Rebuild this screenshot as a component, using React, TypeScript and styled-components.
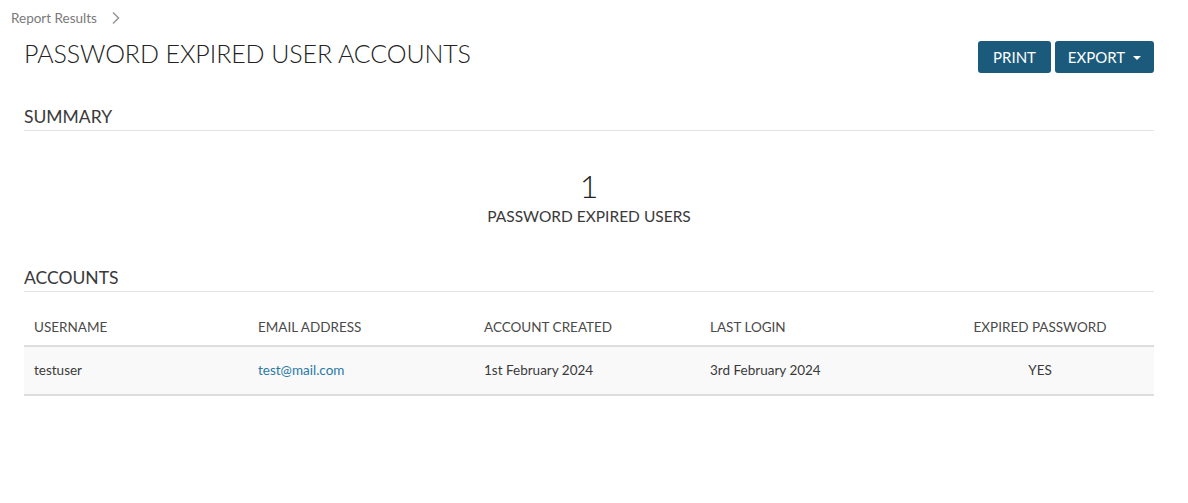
import React from "react";
import styled, { createGlobalStyle } from "styled-components";

const GlobalStyle = createGlobalStyle`
  body {
    margin: 0;
    background: #ffffff;
    font-family: "Lato", "Noto Sans", sans-serif;
    color: #333333;
  }
`;

const Page = styled.div`
  padding: 0 34px 40px 24px;
`;

const Breadcrumb = styled.div`
  display: flex;
  align-items: center;
  gap: 14px;
  margin-left: -13px;
  height: 36px;
  font-size: 13.5px;
  color: #7a7a7a;
`;

const Header = styled.div`
  display: flex;
  justify-content: space-between;
  align-items: flex-start;
`;

const Title = styled.h1`
  margin: 2px 0 0;
  font-size: 25px;
  font-weight: 300;
  letter-spacing: -0.1px;
  color: #222222;
`;

const Actions = styled.div`
  display: flex;
  gap: 4px;
  margin-top: 5px;
`;

const Button = styled.button<{ $width: number }>`
  display: flex;
  align-items: center;
  justify-content: center;
  gap: 8px;
  width: ${(p) => p.$width}px;
  height: 32px;
  border: none;
  border-radius: 3px;
  background: #1b5a7a;
  color: #ffffff;
  font-family: inherit;
  font-size: 15px;
  font-weight: 400;
  cursor: pointer;
`;

const Caret = styled.span`
  width: 0;
  height: 0;
  border-left: 4px solid transparent;
  border-right: 4px solid transparent;
  border-top: 4px solid #ffffff;
  margin-top: 2px;
`;

const Section = styled.section<{ $top: number }>`
  margin-top: ${(p) => p.$top}px;
`;

const SectionTitle = styled.h2`
  margin: 0;
  padding-bottom: 3px;
  font-size: 17.5px;
  font-weight: 400;
  color: #3a3a3a;
  border-bottom: 1px solid #e3e3e3;
`;

const Stat = styled.div`
  display: flex;
  flex-direction: column;
  align-items: center;
  padding-top: 37px;
`;

const StatValue = styled.div`
  font-size: 32px;
  font-weight: 300;
  line-height: 36px;
  color: #222222;
`;

const StatLabel = styled.div`
  margin-top: 2px;
  font-size: 15.5px;
  font-weight: 400;
  line-height: 20px;
  color: #3a3a3a;
`;

const Table = styled.table`
  width: 100%;
  margin-top: 25px;
  border-collapse: collapse;
  table-layout: fixed;
  font-size: 13.5px;
`;

const Th = styled.th<{ $center?: boolean }>`
  padding: 0 10px 8px;
  line-height: 20px;
  text-align: ${(p) => (p.$center ? "center" : "left")};
  font-weight: 400;
  color: #4a4a4a;
  border-bottom: 2px solid #dddddd;
`;

const Row = styled.tr`
  background: #f9f9f9;
  border-bottom: 2px solid #dddddd;
`;

const Td = styled.td<{ $center?: boolean }>`
  height: 46px;
  padding: 0 10px 1px;
  text-align: ${(p) => (p.$center ? "center" : "left")};
  color: #3a3a3a;
`;

const Link = styled.a`
  color: #2a78a6;
  text-decoration: none;
`;

const Chevron = () => (
  <svg width="10" height="14" viewBox="0 0 10 14" fill="none">
    <path d="M2 1.5 L7.5 7 L2 12.5" stroke="#999999" strokeWidth="1.6" />
  </svg>
);

export default function App() {
  return (
    <>
      <GlobalStyle />
      <Page>
        <Breadcrumb>
          <span>Report Results</span>
          <Chevron />
        </Breadcrumb>
        <Header>
          <Title>PASSWORD EXPIRED USER ACCOUNTS</Title>
          <Actions>
            <Button $width={73}>PRINT</Button>
            <Button $width={99}>
              EXPORT <Caret />
            </Button>
          </Actions>
        </Header>

        <Section $top={33}>
          <SectionTitle>SUMMARY</SectionTitle>
          <Stat>
            <StatValue>1</StatValue>
            <StatLabel>PASSWORD EXPIRED USERS</StatLabel>
          </Stat>
        </Section>

        <Section $top={41}>
          <SectionTitle>ACCOUNTS</SectionTitle>
          <Table>
            <colgroup>
              <col style={{ width: 224 }} />
              <col style={{ width: 226 }} />
              <col style={{ width: 226 }} />
              <col style={{ width: 226 }} />
              <col />
            </colgroup>
            <thead>
              <tr>
                <Th>USERNAME</Th>
                <Th>EMAIL ADDRESS</Th>
                <Th>ACCOUNT CREATED</Th>
                <Th>LAST LOGIN</Th>
                <Th $center>EXPIRED PASSWORD</Th>
              </tr>
            </thead>
            <tbody>
              <Row>
                <Td>testuser</Td>
                <Td>
                  <Link href="#">test@mail.com</Link>
                </Td>
                <Td>1st February 2024</Td>
                <Td>3rd February 2024</Td>
                <Td $center>YES</Td>
              </Row>
            </tbody>
          </Table>
        </Section>
      </Page>
    </>
  );
}
